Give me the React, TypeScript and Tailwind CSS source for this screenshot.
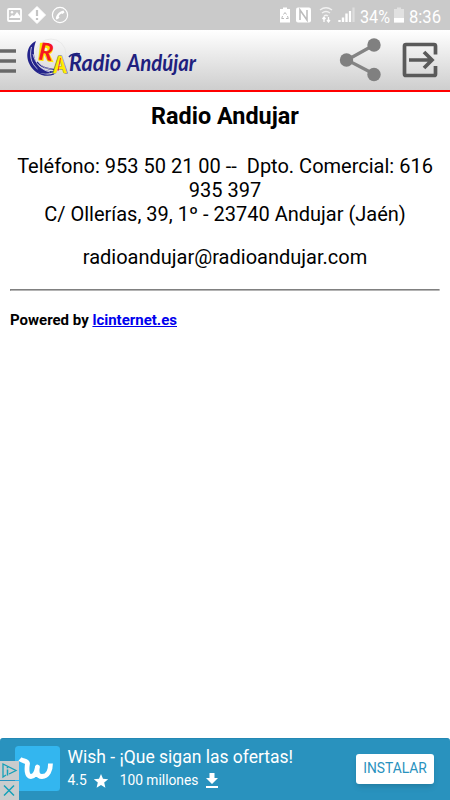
const textRows = [
  'Teléfono: 953 50 21 00 --\u00a0 Dpto. Comercial: 616',
  '935 397',
  'C/ Ollerías, 39, 1º - 23740 Andujar (Jaén)',
];

export default function App() {
  return (
    <div className="flex h-[800px] w-[450px] flex-col overflow-hidden bg-white font-['Roboto',sans-serif] text-black">
      <StatusBar />
      <Header />
      <main className="flex flex-1 flex-col px-[10px] pt-[10px]">
        <h1 className="text-center text-[23.4px] leading-7 font-bold">Radio Andujar</h1>
        <div className="mt-[24px] text-center text-[20px] leading-6">
          {textRows.map((row) => (
            <p key={row} className="whitespace-nowrap">{row}</p>
          ))}
          <p className="mt-[19px]">radioandujar@radioandujar.com</p>
        </div>
        <hr className="mt-[20px] h-[2px] border border-t-[#808080] border-r-[#e8e8e8] border-b-[#b4b4b4] border-l-[#808080]" />
        <p className="mt-[19px] text-[15px] leading-5 font-bold">
          Powered by <a href="#" className="text-[#0000ee] underline">lcinternet.es</a>
        </p>
      </main>
      <AdBanner />
    </div>
  );
}

function StatusBar() {
  return (
    <div className="flex h-[30px] shrink-0 items-center justify-between bg-[#cacaca] text-white">
      <svg width="75" height="30" viewBox="0 0 75 30" fill="none">
        <rect x="8" y="9" width="13" height="12" rx="1" stroke="white" strokeWidth="1.8" />
        <path d="M9 18l3-3 2 1 3-4 3 4v2z" fill="white" />
        <circle cx="12" cy="12.3" r="1.2" fill="white" />
        <path d="M37 6.500l8.500 8.500-8.500 8.500-8.500-8.500z" fill="white" stroke="white" strokeLinejoin="round" />
        <path d="M37 10v6M37 18v2" stroke="#c4c4c4" strokeWidth="2.200" />
        <circle cx="60" cy="15" r="7.600" stroke="white" strokeWidth="1.200" />
        <path d="M56 19.500c-1-3.500 3-8 7.500-9l1 2-2 1.500-1-.6c-1.600.8-2.400 1.800-2.800 3l.9.900L58 19z" fill="white" />
      </svg>
      <div className="flex items-center pr-[5px]">
        <svg width="81" height="30" viewBox="277 0 81 30" fill="none">
          <path d="M280 9h3V7.500h4V9h3v13.500h-10z" fill="white" />
          <path d="M283.500 14.500l1.500-2 1.500 2M287.500 16l.8 2.500H286M284 18.500h-2.300l.8-2.500" stroke="#bbb" />
          <rect x="296" y="7.500" width="15" height="15" rx="2" fill="white" />
          <path d="M300 20V10l7 10V10" stroke="#bbb" strokeWidth="1.500" />
          <path d="M320 10q6-4.500 12 0M322 13q4-3 8 0M324 16q2-1.500 4 0" stroke="#f2f2f2" strokeWidth="1.300" />
          <path d="M324 22v-5M322.500 19l1.500-2 1.500 2M328.500 17v5M327 20l1.500 2 1.500-2" stroke="white" strokeWidth="1.300" />
          <path d="M339.500 22v-2M343 22v-4.500M346.500 22v-8.500" stroke="white" strokeWidth="2.400" />
          <path d="M350 22V11" stroke="white" strokeWidth="2.200" />
          <path d="M353.500 22V7.500" stroke="#dedede" strokeWidth="2.200" />
        </svg>
        <svg width="87" height="30" viewBox="358 0 87 30" fill="none">
          <text x="360" y="22.5" fontSize="19" fill="white" textLength="30" lengthAdjust="spacingAndGlyphs">34%</text>
          <path d="M394 9h3V7.500h4V9h3v13.500h-10z" fill="#e1e1e1" />
          <path d="M394 18h10v4.500h-10z" fill="white" />
          <text x="409" y="22.5" fontSize="19" fill="white" textLength="32" lengthAdjust="spacingAndGlyphs">8:36</text>
        </svg>
      </div>
    </div>
  );
}

function Header() {
  return (
    <header className="flex h-[62px] shrink-0 items-center justify-between border-b-2 border-[#ff0000] bg-linear-to-b from-white to-[#cecece]">
      <svg width="220" height="60" viewBox="0 30 220 60" fill="none">
        <path d="M0 51h16M0 61h16M0 71h16" stroke="#686868" strokeWidth="3.500" />
        <path d="M36 41C25 46 25 61 33 69c6 6 17 6 22 2-9 1-17-3-20-12-2-7-1-13 1-18z" fill="#23238b" />
        <path d="M31.500 47c-2 8-1 16 6 22M33 54c2 9 8 16 17 18" stroke="white" strokeWidth=".7" />
        <path d="M33 68c4 6 13 9 21 6M37 62c5 6 13 8 22 7" stroke="#23238b" strokeWidth="1.300" />
        <circle cx="51" cy="54" r="15" stroke="#e2e2e2" strokeWidth=".6" />
        <g fontFamily="Lato, sans-serif" fontWeight="900">
          <text transform="translate(38 59.500) rotate(6)" fontSize="22" fill="#ffe600" stroke="#ffe600" strokeWidth="2">R</text>
          <text transform="translate(38 59.500) rotate(6)" fontSize="24" fontWeight="700" fill="#f51622" fontStyle="italic">R</text>
          <text x="53" y="73" fontSize="23" textLength="14" lengthAdjust="spacingAndGlyphs" fill="#3a378d" stroke="#3a378d" strokeWidth=".8">A</text>
          <text x="53.500" y="72.500" fontSize="22" textLength="13" lengthAdjust="spacingAndGlyphs" fill="#ffec00" stroke="#ffec00" strokeWidth=".5">A</text>
        </g>
        <path d="M60.500 58l-2.500 13" stroke="#f51622" strokeWidth=".8" />
        <g fill="#20207e" fontFamily="Lato, cursive" fontStyle="italic" fontWeight="700">
          <text x="69" y="71" fontSize="22" textLength="52" lengthAdjust="spacingAndGlyphs">Radio</text>
          <text x="127" y="71" fontSize="22" textLength="69" lengthAdjust="spacingAndGlyphs">Andújar</text>
        </g>
        <path d="M69 57c2-3 7-4 11-3" stroke="#20207e" strokeWidth="1.500" />
      </svg>
      <svg width="120" height="60" viewBox="330 30 120 60" fill="none">
        <path d="M374 45l-27 15 27 14" stroke="#848484" strokeWidth="3.200" />
        <g fill="#808080">
          <circle cx="374" cy="45" r="6.700" />
          <circle cx="346.500" cy="60" r="6.700" />
          <circle cx="374" cy="74.500" r="6.700" />
        </g>
        <path d="M435.500 54.500v-8.500q0-1.500-1.500-1.500h-28q-1.500 0-1.500 1.500v28q0 1.500 1.500 1.500h28q1.500 0 1.500-1.500v-8" stroke="#5a5a5a" strokeWidth="3.700" />
        <path d="M409 60h23M424 52l8 8-8 8" stroke="#5a5a5a" strokeWidth="3.700" />
      </svg>
    </header>
  );
}

function AdBanner() {
  return (
    <div className="relative flex h-[62px] shrink-0 items-center rounded-t-[3px] border-t border-[#2388b4] bg-[#2992be] pb-[2px] pl-[15px] text-white">
      <svg width="45" height="45" viewBox="0 0 45 45" fill="none">
        <rect width="45" height="45" rx="3.500" fill="#33b6ef" />
        <path d="M5 13c3 2.500 7 1.500 7.500 4.500-.8 5-1.200 13 3.500 13 4 0 5.500-4.500 6.500-9.500-1 4.500-.5 9.500 4.500 9.500 6 0 8.500-6.500 8.500-13" stroke="white" strokeWidth="4.800" strokeLinejoin="round" />
      </svg>
      <div className="ml-[7.5px] flex flex-col pb-[2px]">
        <p className="text-[17.5px] leading-[22px] whitespace-nowrap">Wish - ¡Que sigan las ofertas!</p>
        <div className="mt-[2px] flex items-center text-[13.8px] leading-5">
          <span>4.5</span>
          <svg className="mt-[2px] ml-[6px]" width="16" height="16" viewBox="0 0 16 16" fill="white">
            <path d="M8 1l2 4.800 5.200.4-4 3.400 1.200 5.100L8 12l-4.400 2.700 1.200-5.100-4-3.400L6 5.800z" />
          </svg>
          <span className="ml-[11px]">100 millones</span>
          <svg className="mt-[2px] ml-[7px]" width="14" height="16" viewBox="0 0 14 16" fill="white">
            <path d="M4.500 0h5v5H13l-6 6-6-6h3.500zM1 13h12v2H1z" />
          </svg>
        </div>
      </div>
      <button className="mr-[16px] ml-auto h-[30px] w-[78px] rounded-[3px] bg-white pb-px text-[13.8px] text-[#2992be] shadow-md">INSTALAR</button>
      {/* AdChoices */}
      <svg className="absolute bottom-0 left-0" width="19" height="39" viewBox="0 0 19 39" fill="none">
        <path d="M0 0h19v19H0zM0 20h19v19H0z" fill="#c9cccd" />
        <path d="M6 14l-3 2V3l13 6.500-7 3.500" stroke="#15a0b8" strokeWidth="1.300" />
        <path d="M7.500 8.500v6M7.500 5.800v1.400M4 24.500l10 10M14 24.500l-10 10" stroke="#15a0b8" strokeWidth="1.500" />
      </svg>
    </div>
  );
}
